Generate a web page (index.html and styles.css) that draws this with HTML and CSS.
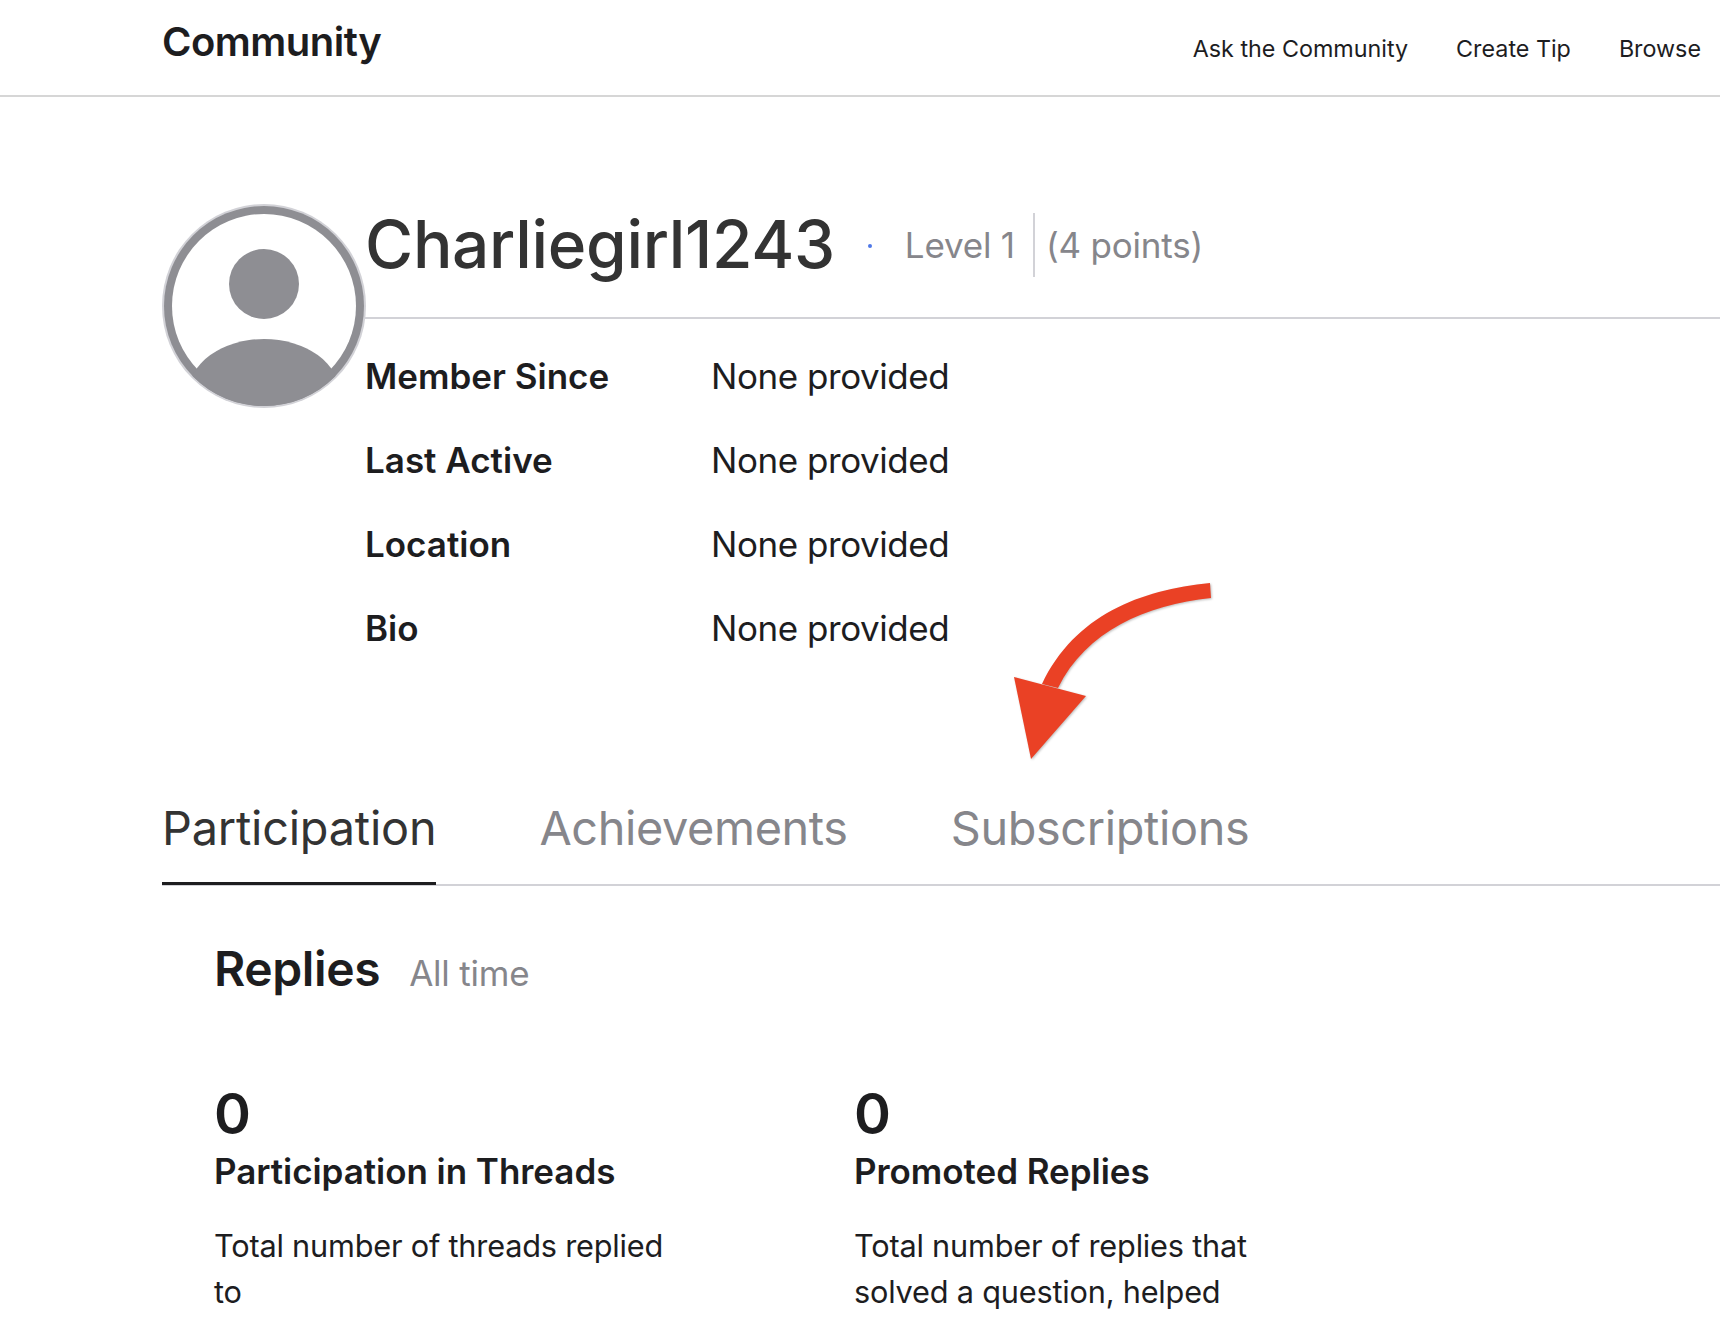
FILE: index.html
```html
<!DOCTYPE html>
<html lang="en">
<head>
    <meta charset="UTF-8">
    <meta name="viewport" content="width=device-width, initial-scale=1.0">
    <title>Community Profile</title>
    <link rel="stylesheet" href="styles.css">
</head>
<body>
<header class="topbar">
    <div class="brand">Community</div>
    <nav class="topnav">
        <a href="#">Ask the Community</a>
        <a href="#">Create Tip</a>
        <a href="#">Browse</a>
    </nav>
</header>

<section class="profile">
    <svg class="avatar" viewBox="0 0 204 204" aria-hidden="true">
        <defs>
            <clipPath id="avatar-clip"><circle cx="102" cy="102" r="100"/></clipPath>
        </defs>
        <circle cx="102" cy="102" r="102" fill="#d2d2d7"/>
        <circle cx="102" cy="102" r="100" fill="#8e8e93"/>
        <circle cx="102" cy="102" r="92" fill="#fff"/>
        <circle cx="102" cy="80" r="35" fill="#8e8e93"/>
        <ellipse cx="102" cy="190" rx="76" ry="55" fill="#8e8e93" clip-path="url(#avatar-clip)"/>
    </svg>
    <div class="profile-main">
        <div class="profile-head">
            <h1>Charliegirl1243</h1>
            <span class="level-dot"></span>
            <span class="level">Level 1</span>
            <span class="points">(4 points)</span>
        </div>
        <dl class="facts">
            <div class="fact"><dt>Member Since</dt><dd>None provided</dd></div>
            <div class="fact"><dt>Last Active</dt><dd>None provided</dd></div>
            <div class="fact"><dt>Location</dt><dd>None provided</dd></div>
            <div class="fact"><dt>Bio</dt><dd>None provided</dd></div>
        </dl>
    </div>
</section>

<nav class="tabs">
    <a href="#" class="tab active">Participation</a>
    <a href="#" class="tab">Achievements</a>
    <a href="#" class="tab">Subscriptions</a>
</nav>

<section class="replies">
    <div class="replies-head">
        <h2>Replies</h2>
        <span class="period">All time</span>
    </div>
    <div class="stats">
        <div class="stat">
            <div class="stat-num">0</div>
            <h3>Participation in Threads</h3>
            <p>Total number of threads replied to</p>
        </div>
        <div class="stat">
            <div class="stat-num">0</div>
            <h3>Promoted Replies</h3>
            <p>Total number of replies that solved a question, helped</p>
        </div>
    </div>
</section>

<!-- annotation drawn over the page -->
<svg class="callout" viewBox="0 0 240 200" aria-hidden="true">
    <path d="M206 3 C136 10 71 35 38 104 L54 108 C82 51 142 25 207 18 Z" fill="#ea4125"/>
    <path d="M10 97 L82 116 L27 179 Z" fill="#ea4125"/>
</svg>
</body>
</html>
```

FILE: styles.css
```css
html, body {
    margin: 0;
    height: 1318px;
    overflow: hidden;
}

body {
    position: relative;
    font-family: Inter, "Liberation Sans", sans-serif;
    background-color: white;
    color: #1d1d1f;
}

a {
    color: inherit;
    text-decoration: none;
}

.topbar {
    display: flex;
    justify-content: space-between;
    height: 95px;
    padding: 0 19px 0 162px;
    border-bottom: 2px solid #d6d6d6;
}

.brand {
    font-size: 40px;
    font-weight: 600;
    letter-spacing: -0.5px;
    line-height: 83px;
}

.topnav {
    display: flex;
    gap: 48px;
    padding-top: 32px;
    font-size: 23.3px;
    line-height: 34px;
}

.profile {
    display: flex;
    padding: 107px 0 0 162px;
}

.avatar {
    flex: none;
    width: 204px;
    height: 204px;
}

.profile-main {
    flex: 1;
    margin-left: -1px;
}

.profile-head {
    display: flex;
    align-items: center;
    height: 82px;
    padding-bottom: 31px;
    border-bottom: 2px solid #d2d2d7;
}

h1 {
    margin: 0 0 2px;
    font-size: 65.7px;
    font-weight: 500;
    color: #333;
    letter-spacing: -0.3px;
}

.level-dot {
    width: 4px;
    height: 4px;
    margin: 1px 33px 0 33px;
    border-radius: 50%;
    background-color: #4f78e8;
}

.level, .points {
    font-size: 35px;
    color: #86868b;
    letter-spacing: -0.2px;
}

.level {
    padding-right: 18px;
}

.points {
    display: flex;
    align-items: center;
    height: 64px;
    padding-left: 11px;
    border-left: 2px solid #d2d2d7;
}

.facts {
    margin: 15px 0 0;
}

.fact {
    display: flex;
    align-items: center;
    height: 84px;
    font-size: 35px;
}

dt {
    width: 346px;
    font-weight: 600;
}

dd {
    margin: 0;
    letter-spacing: -0.44px;
}

.tabs {
    display: flex;
    gap: 103px;
    height: 94px;
    margin: 120px 0 0 162px;
    border-bottom: 2px solid #d2d2d7;
}

.tab {
    height: 92px;
    font-size: 46.8px;
    line-height: 76px;
    letter-spacing: -0.35px;
    color: #86868b;
}

.tab.active {
    color: #333;
    letter-spacing: -0.2px;
    border-bottom: 3px solid #1d1d1f;
}

.replies {
    margin-top: 47px;
    padding-left: 214px;
}

.replies-head {
    display: flex;
    align-items: baseline;
    gap: 29px;
}

h2 {
    margin: 0;
    font-size: 48px;
    font-weight: 600;
    letter-spacing: -0.4px;
    line-height: 72px;
}

.period {
    font-size: 35px;
    color: #86868b;
    letter-spacing: -0.2px;
}

.stats {
    display: flex;
    gap: 180px;
    margin-top: 77px;
}

.stat {
    width: 460px;
}

.stat-num {
    font-size: 56px;
    font-weight: 600;
    line-height: 65px;
}

h3 {
    margin: 0 0 28px;
    font-size: 35px;
    font-weight: 600;
    letter-spacing: -0.05px;
    line-height: 48px;
}

.stat p {
    margin: 0;
    font-size: 30.7px;
    line-height: 46px;
    letter-spacing: -0.2px;
}

.callout {
    position: absolute;
    left: 1004px;
    top: 580px;
    width: 240px;
    height: 200px;
    filter: drop-shadow(1px 1px 1px rgba(0,0,0,0.25));
}
```
